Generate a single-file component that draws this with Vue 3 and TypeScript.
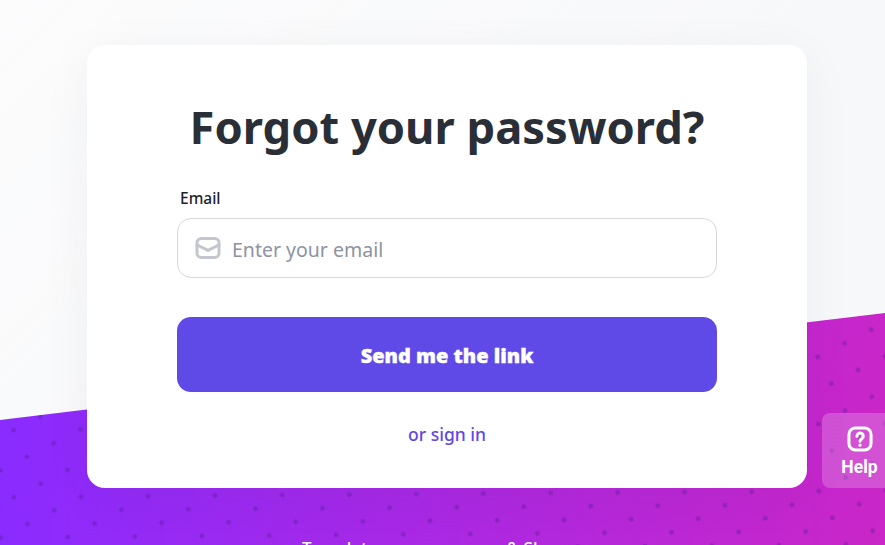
<script setup lang="ts">
const footerLinks: string[] = ['Templates', '& Share']
const star = '0,-3.2 1.2,-1.6 3.1,-1.1 2,0.6 2,2.7 0,2 -2,2.7 -2,0.6 -3.1,-1.1 -1.2,-1.6'
</script>

<template>
  <div class="page">
    <svg class="backdrop" viewBox="0 0 885 545" width="885" height="545" aria-hidden="true">
      <defs>
        <linearGradient id="wave" gradientUnits="userSpaceOnUse" x1="0" y1="440" x2="885" y2="520">
          <stop offset="0" stop-color="#8a2bff" />
          <stop offset="1" stop-color="#ca26c8" />
        </linearGradient>
        <pattern id="dots" width="30" height="30" patternUnits="userSpaceOnUse" patternTransform="translate(13.3 430) rotate(-27) translate(-15 -15)">
          <polygon :points="star" transform="translate(15 15)" fill="#4a1a8c" fill-opacity="0.32" />
        </pattern>
        <clipPath id="slant">
          <polygon points="0,420 885,313 885,545 0,545" />
        </clipPath>
      </defs>
      <g clip-path="url(#slant)">
        <rect width="885" height="545" fill="url(#wave)" />
        <rect width="885" height="545" fill="url(#dots)" />
      </g>
    </svg>

    <main class="card">
      <h1 class="title">Forgot your password?</h1>
      <form class="form" @submit.prevent>
        <label class="label" for="email">Email</label>
        <div class="field">
          <svg class="mail" viewBox="0 0 26 24" width="26" height="24" fill="none" stroke="#c3c6ce" stroke-width="3" stroke-linecap="round" stroke-linejoin="round" aria-hidden="true">
            <rect x="2" y="2.6" width="22" height="18.8" rx="4.2" />
            <path d="M2.2 9 13 14.4 23.8 9" />
          </svg>
          <input id="email" class="input" type="email" placeholder="Enter your email" />
        </div>
        <button class="submit" type="submit">Send me the link</button>
        <a class="signin" href="#">or sign in</a>
      </form>
    </main>

    <footer class="footer">
      <a v-for="link in footerLinks" :key="link" class="footer-link" href="#">{{ link }}</a>
    </footer>

    <button class="help" type="button">
      <svg viewBox="0 0 24 24" width="26" height="26" fill="none" stroke="#fff" stroke-width="2.8" stroke-linecap="round" stroke-linejoin="round" aria-hidden="true">
        <rect x="1.8" y="1.8" width="20.4" height="20.4" rx="6" />
        <path d="M9.2 9.4a2.9 2.9 0 1 1 4.5 2.4c-1 .7-1.7 1.2-1.7 2.2" />
        <path d="M12 17.6v.1" />
      </svg>
      <span class="help-text">Help</span>
    </button>
  </div>
</template>

<style>
html,
body {
  margin: 0;
  overflow: hidden;
}
</style>

<style scoped>
.page {
  position: relative;
  width: 885px;
  height: 545px;
  overflow: hidden;
  background: linear-gradient(135deg, #fcfcfd 0%, #f7f8fa 60%);
  display: flex;
  flex-direction: column;
  align-items: flex-start;
  font-family: "Noto Sans", "Open Sans", sans-serif;
}

.backdrop {
  position: absolute;
  inset: 0;
}

.card {
  position: relative;
  box-sizing: border-box;
  width: 720px;
  height: 443px;
  margin: 45px 0 0 87px;
  padding: 48px 90px 0;
  background: #fff;
  border-radius: 18px;
  box-shadow: 0 10px 50px rgba(30, 40, 60, 0.05);
  flex: none;
}

.title {
  margin: 0;
  font-size: 45.3px;
  line-height: 68px;
  font-weight: 700;
  color: #2a2f37;
  text-align: center;
  white-space: nowrap;
}

.form {
  display: flex;
  flex-direction: column;
  margin-top: 26px;
}

.label {
  margin-left: 3px;
  font-size: 15.5px;
  line-height: 22px;
  font-weight: 500;
  color: #1f242b;
}

.field {
  display: flex;
  align-items: center;
  gap: 11px;
  box-sizing: border-box;
  height: 60px;
  margin-top: 9px;
  padding-left: 17px;
  border: 1px solid #d5d7dd;
  border-radius: 14px;
  background: #fff;
}

.input {
  flex: 1;
  min-width: 0;
  border: 0;
  outline: 0;
  padding: 4px 0 0;
  font: 400 19.5px/28px "Noto Sans", "Open Sans", sans-serif;
  color: #2a2f37;
  background: transparent;
}

.input::placeholder {
  color: #8d93a1;
  opacity: 1;
}

.submit {
  height: 75px;
  margin-top: 39px;
  padding: 2px 0 0;
  border: 0;
  border-radius: 14px;
  background: #604ae7;
  color: #fff;
  font: 900 20px/28px "Noto Sans", "Open Sans", sans-serif;
  -webkit-text-stroke: 0.4px #fff;
}

.signin {
  margin-top: 29px;
  align-self: center;
  font-size: 17.5px;
  line-height: 26px;
  font-weight: 500;
  color: #5f47e6;
  text-decoration: none;
}

.footer {
  position: relative;
  display: flex;
  gap: 121px;
  margin: 48px 0 0 302px;
}

.footer-link {
  font-size: 17px;
  line-height: 24px;
  color: #fff;
  text-decoration: none;
  font-weight: 500;
}

.help {
  position: absolute;
  right: 0;
  top: 413px;
  width: 63px;
  height: 75px;
  padding: 13px 0 0 12px;
  border: 0;
  border-radius: 8px 0 0 8px;
  background: rgba(255, 255, 255, 0.2);
  color: #fff;
  display: flex;
  flex-direction: column;
  align-items: center;
  gap: 5px;
}

.help-text {
  font: 700 17.5px/20px Roboto, sans-serif;
}
</style>
